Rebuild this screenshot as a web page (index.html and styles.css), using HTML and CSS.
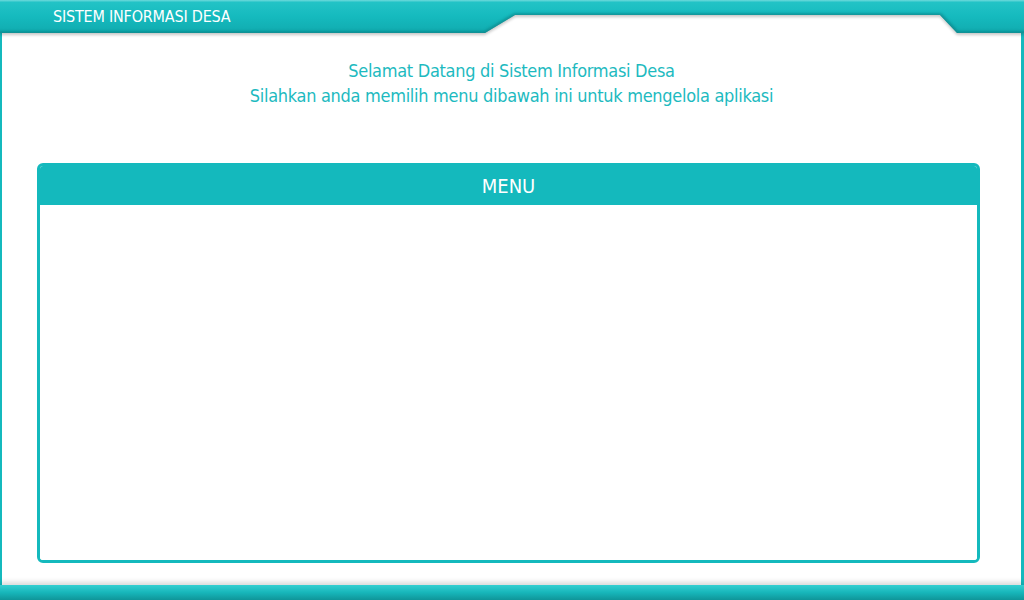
FILE: index.html
```html
<!DOCTYPE html>
<html lang="id">
<head>
<meta charset="utf-8">
<title>Sistem Informasi Desa</title>
<link rel="stylesheet" href="styles.css">
</head>
<body>
<div class="page">
  <header class="topbar">
    <svg class="topbar-shape" width="1024" height="40" viewBox="0 0 1024 40" aria-hidden="true">
      <defs>
        <linearGradient id="tg" x1="0" y1="0" x2="0" y2="33" gradientUnits="userSpaceOnUse">
          <stop offset="0" stop-color="#6fdadc"/>
          <stop offset="0.07" stop-color="#22c3c6"/>
          <stop offset="0.5" stop-color="#15babe"/>
          <stop offset="1" stop-color="#11abaf"/>
        </linearGradient>
        <clipPath id="tc"><path d="M0 0H1024V33H957L940 15H515L485 33H0Z"/></clipPath>
        <filter id="bl" x="-5%" y="-50%" width="110%" height="200%"><feGaussianBlur stdDeviation="1.6"/></filter>
        <filter id="sh" x="-5%" y="-50%" width="110%" height="200%"><feGaussianBlur stdDeviation="1.5"/></filter>
      </defs>
      <path d="M0 1H1024V35H957L940 17H515L485 35H0Z" fill="#000" opacity="0.22" filter="url(#sh)"/>
      <path d="M0 0H1024V33H957L940 15H515L485 33H0Z" fill="url(#tg)"/>
      <g clip-path="url(#tc)">
        <path d="M-5 34H485L515 16H940L957 34H1030" fill="none" stroke="#0a7e82" stroke-width="5" opacity="0.75" filter="url(#bl)"/>
      </g>
    </svg>
    <div class="title">SISTEM INFORMASI DESA</div>
  </header>
  <main class="main">
    <div class="welcome">
      <p>Selamat Datang di Sistem Informasi Desa</p>
      <p>Silahkan anda memilih menu dibawah ini untuk mengelola aplikasi</p>
    </div>
    <section class="panel">
      <div class="panel-head">MENU</div>
      <div class="panel-body"></div>
    </section>
  </main>
  <footer class="bottombar"></footer>
</div>
</body>
</html>
```
FILE: styles.css
```css
html, body {
  margin: 0;
  padding: 0;
  background: #fff;
}
body {
  font-family: "DejaVu Sans Condensed", "Liberation Sans", sans-serif;
}
.page {
  width: 1024px;
  height: 600px;
  display: flex;
  flex-direction: column;
  overflow: hidden;
}
.topbar {
  display: grid;
  height: 33px;
  position: relative;
  z-index: 2;
}
.topbar-shape {
  grid-area: 1 / 1;
  display: block;
}
.title {
  grid-area: 1 / 1;
  color: #fff;
  font-size: 16px;
  letter-spacing: -0.2px;
  line-height: 34px;
  height: 33px;
  padding-left: 53px;
}
.main {
  flex: 1;
  border-left: 2px solid #14b9bd;
  border-right: 3px solid #14b9bd;
  display: flex;
  flex-direction: column;
  position: relative;
  z-index: 1;
}
.welcome {
  padding-top: 25px;
  text-align: center;
  color: #1dbac0;
  font-size: 18px;
  letter-spacing: -0.3px;
  line-height: 25px;
}
.welcome p {
  margin: 0;
}
.panel {
  margin: 55px 0 0 35px;
  width: 943px;
  height: 400px;
  box-sizing: border-box;
  border: 3px solid #14b9bd;
  border-radius: 6px;
  display: flex;
  flex-direction: column;
  overflow: hidden;
}
.panel-head {
  background: #14b9bd;
  color: #fff;
  font-size: 20px;
  text-align: center;
  margin-top: -3px;
  padding-top: 3px;
  height: 39px;
  line-height: 41px;
}
.panel-body {
  flex: 1;
  background: #fff;
}
.bottombar {
  height: 15px;
  background: linear-gradient(#35cfd1, #17b6ba 50%, #0f9599);
  box-shadow: 0 -3px 5px rgba(0, 0, 0, 0.15);
  position: relative;
  z-index: 2;
}
```
